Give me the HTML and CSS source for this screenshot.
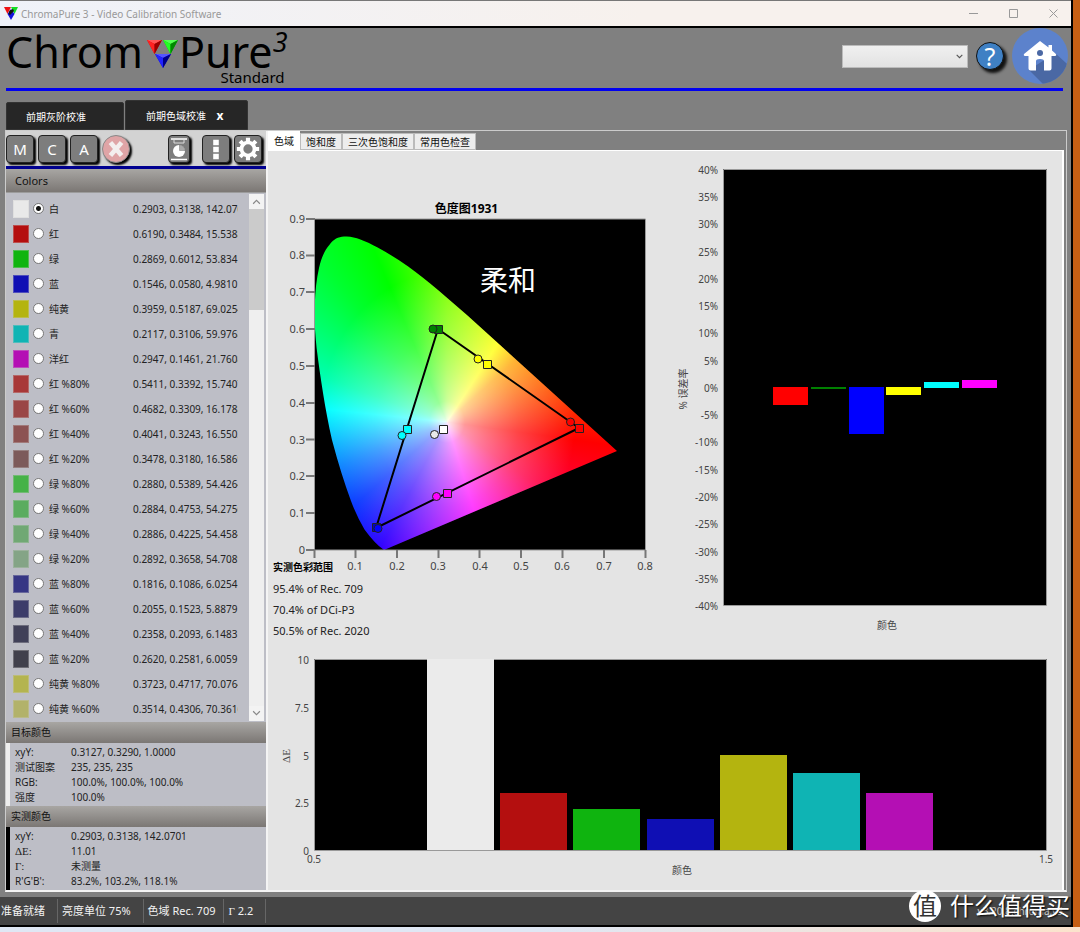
FILE: index.html
```html
<!DOCTYPE html>
<html lang="zh-CN">
<head>
<meta charset="utf-8">
<meta name="viewport" content="width=device-width, initial-scale=1">
<title>ChromaPure 3 - Video Calibration Software</title>
<link rel="stylesheet" href="styles.css">
</head>
<body>
<div class="app">
  <header class="titlebar">
    <svg class="app-icon" viewBox="0 0 14 15" aria-hidden="true"><path d="M0 1h7l-3.500 7z" fill="#e11"/><path d="M7 1h7l-3.500 7z" fill="#1d2"/><path d="M3.500 8L7 3l3.500 5L7 14z" fill="#11d"/><path d="M5.500 4.500L9 3l1 2-4 4-1.500-1z" fill="#111"/></svg>
    <span class="title">ChromaPure 3 - Video Calibration Software</span>
    <div class="window-buttons">
      <button type="button" aria-label="最小化"><svg viewBox="0 0 12 12"><path d="M1 5.500h9"/></svg></button>
      <button type="button" aria-label="最大化"><svg viewBox="0 0 12 12"><path d="M1.500 1.500h8v8h-8z"/></svg></button>
      <button type="button" aria-label="关闭"><svg viewBox="0 0 12 12"><path d="M1.500 1.500l8 8M9.500 1.500l-8 8"/></svg></button>
    </div>
  </header>

  <div class="banner">
    <div class="brand">
      <div class="wordmark">
        <span>Chrom</span>
        <svg class="brand-mark" viewBox="0 0 32 28" aria-hidden="true">
          <path d="M0 0h15l-7.500 14z" fill="#d00"/><path d="M0 0h15l-7.500 4z" fill="#f55"/><path d="M0 0l7.500 4v10z" fill="#f22"/><path d="M15 0L7.500 4v10z" fill="#900"/>
          <path d="M16 0h15l-7.500 14z" fill="#0b0"/><path d="M16 0h15l-7.500 4z" fill="#5f5"/><path d="M16 0l7.500 4v10z" fill="#2f2"/><path d="M31 0l-7.500 4v10z" fill="#080"/>
          <path d="M8 14h16l-8 14z" fill="#00c"/><path d="M8 14h16l-8 4z" fill="#55f"/><path d="M8 14l8 4v10z" fill="#22f"/><path d="M24 14l-8 4v10z" fill="#008"/>
        </svg>
        <span>Pure</span><span class="version">3</span>
      </div>
      <div class="edition">Standard</div>
    </div>
    <div class="banner-tools">
      <label class="picker">
        <select aria-label="选择"><option></option></select>
        <svg viewBox="0 0 8 6" aria-hidden="true"><path d="M1.500 1.500L4 4l2.500-2.500"/></svg>
      </label>
      <button class="help" type="button">?</button>
      <button class="home" type="button" aria-label="主页">
        <svg viewBox="0 0 56 56">
          <defs><clipPath id="disc"><circle cx="28" cy="28" r="28"/></clipPath></defs>
          <circle cx="28" cy="28" r="28" fill="#5c82cc"/>
          <g clip-path="url(#disc)"><path d="M43 25L66 46 50 66 31 56 17 42z" fill="#4a68a4"/></g>
          <path d="M28 13L12 26q-1 2 2 2h2.500v12.500q0 2 2 2H24V33q0-2 4-2t4 2v9.500h5.500q2 0 2-2V28H42q3 0 2-2l-4-3.500V17h-3.500v2.500z" fill="#fff"/>
          <circle cx="28" cy="25" r="3" fill="#4a68a4"/>
        </svg>
      </button>
    </div>
  </div>

  <nav class="doc-tabs">
    <button type="button" class="doc-tab">前期灰阶校准</button>
    <button type="button" class="doc-tab active">前期色域校准 <b>x</b></button>
  </nav>

  <main class="workspace">
    <aside class="sidebar">
      <div class="toolbar">
        <button type="button" class="tool">M</button>
        <button type="button" class="tool">C</button>
        <button type="button" class="tool">A</button>
        <button type="button" class="tool stop" aria-label="停止"><svg viewBox="0 0 28 28"><path d="M8 7l12 14M20 7L8 21" stroke="#f3eeee" stroke-width="5"/></svg></button>
        <button type="button" class="tool report" aria-label="报告"><svg viewBox="0 0 20 26"><path d="M2 3h16M2 23.500h16" stroke="#fff" stroke-width="1.500"/><path d="M5 4v3h10V4" fill="none" stroke="#ddd"/><circle cx="10" cy="15" r="6" fill="#fff"/><path d="M10.500 14.500V9a6 6 0 0 1 5.500 5.500z" fill="#aaa" stroke="#777" stroke-width=".5"/></svg></button>
        <button type="button" class="tool" aria-label="更多"><svg viewBox="0 0 28 28"><path d="M11 4h6v6h-6zM11 11.500h6v6h-6zM11 19h6v6h-6z" fill="#fff"/></svg></button>
        <button type="button" class="tool" aria-label="设置"><svg viewBox="0 0 28 28"><circle cx="14" cy="14" r="7" fill="none" stroke="#fff" stroke-width="4"/><path d="M14 2v5M14 21v5M2 14h5M21 14h5M5.500 5.500L9 9M19 19l3.500 3.500M22.500 5.500L19 9M9 19l-3.500 3.500" stroke="#fff" stroke-width="4.500"/></svg></button>
      </div>
      <h2 class="bar bar-colors">Colors</h2>
      <div class="color-area">
        <div class="color-list">
          <label class="row"><i style="background:#e9e9e9"></i><input type="radio" name="color" checked><span>白</span><output>0.2903, 0.3138, 142.0701</output></label>
          <label class="row"><i style="background:#b40f0f"></i><input type="radio" name="color"><span>红</span><output>0.6190, 0.3484, 15.5388</output></label>
          <label class="row"><i style="background:#0fb40f"></i><input type="radio" name="color"><span>绿</span><output>0.2869, 0.6012, 53.8341</output></label>
          <label class="row"><i style="background:#0f0fb4"></i><input type="radio" name="color"><span>蓝</span><output>0.1546, 0.0580, 4.9810</output></label>
          <label class="row"><i style="background:#b4b40f"></i><input type="radio" name="color"><span>纯黄</span><output>0.3959, 0.5187, 69.0254</output></label>
          <label class="row"><i style="background:#0fb4b4"></i><input type="radio" name="color"><span>青</span><output>0.2117, 0.3106, 59.9768</output></label>
          <label class="row"><i style="background:#b40fb4"></i><input type="radio" name="color"><span>洋红</span><output>0.2947, 0.1461, 21.7608</output></label>
          <label class="row"><i style="background:#a83838"></i><input type="radio" name="color"><span>红 %80%</span><output>0.5411, 0.3392, 15.7407</output></label>
          <label class="row"><i style="background:#9a4646"></i><input type="radio" name="color"><span>红 %60%</span><output>0.4682, 0.3309, 16.1788</output></label>
          <label class="row"><i style="background:#8c5252"></i><input type="radio" name="color"><span>红 %40%</span><output>0.4041, 0.3243, 16.5503</output></label>
          <label class="row"><i style="background:#7c5a5a"></i><input type="radio" name="color"><span>红 %20%</span><output>0.3478, 0.3180, 16.5869</output></label>
          <label class="row"><i style="background:#46b248"></i><input type="radio" name="color"><span>绿 %80%</span><output>0.2880, 0.5389, 54.4264</output></label>
          <label class="row"><i style="background:#5bac5f"></i><input type="radio" name="color"><span>绿 %60%</span><output>0.2884, 0.4753, 54.2756</output></label>
          <label class="row"><i style="background:#70a874"></i><input type="radio" name="color"><span>绿 %40%</span><output>0.2886, 0.4225, 54.4584</output></label>
          <label class="row"><i style="background:#84a486"></i><input type="radio" name="color"><span>绿 %20%</span><output>0.2892, 0.3658, 54.7089</output></label>
          <label class="row"><i style="background:#363684"></i><input type="radio" name="color"><span>蓝 %80%</span><output>0.1816, 0.1086, 6.0254</output></label>
          <label class="row"><i style="background:#3c3c6a"></i><input type="radio" name="color"><span>蓝 %60%</span><output>0.2055, 0.1523, 5.8879</output></label>
          <label class="row"><i style="background:#404058"></i><input type="radio" name="color"><span>蓝 %40%</span><output>0.2358, 0.2093, 6.1483</output></label>
          <label class="row"><i style="background:#40404c"></i><input type="radio" name="color"><span>蓝 %20%</span><output>0.2620, 0.2581, 6.0059</output></label>
          <label class="row"><i style="background:#b4b450"></i><input type="radio" name="color"><span>纯黄 %80%</span><output>0.3723, 0.4717, 70.0764</output></label>
          <label class="row"><i style="background:#b2b26a"></i><input type="radio" name="color"><span>纯黄 %60%</span><output>0.3514, 0.4306, 70.3616</output></label>
        </div>
        <div class="scrollbar">
          <button type="button" aria-label="向上"><svg viewBox="0 0 8 6"><path d="M1 5l3-3 3 3"/></svg></button>
          <div class="thumb"></div>
          <button type="button" class="down" aria-label="向下"><svg viewBox="0 0 8 6"><path d="M1 1l3 3 3-3"/></svg></button>
        </div>
      </div>
      <h2 class="bar">目标颜色</h2>
      <dl class="facts target">
        <dt>xyY:</dt><dd>0.3127, 0.3290, 1.0000</dd>
        <dt>测试图案</dt><dd>235, 235, 235</dd>
        <dt>RGB:</dt><dd>100.0%, 100.0%, 100.0%</dd>
        <dt>强度</dt><dd>100.0%</dd>
      </dl>
      <h2 class="bar">实测颜色</h2>
      <dl class="facts measured">
        <dt>xyY:</dt><dd>0.2903, 0.3138, 142.0701</dd>
        <dt class="serif">ΔE:</dt><dd>11.01</dd>
        <dt class="serif">Γ:</dt><dd>未测量</dd>
        <dt>R'G'B':</dt><dd>83.2%, 103.2%, 118.1%</dd>
      </dl>
    </aside>

    <section class="results">
      <div class="view-tabs">
        <button type="button" class="active">色域</button>
        <button type="button">饱和度</button>
        <button type="button">三次色饱和度</button>
        <button type="button">常用色检查</button>
      </div>
      <div class="charts">
        <div class="gamut">
          <svg class="chart" viewBox="268 152 400 404">
            <defs>
              <clipPath id="locus"><path d="M70 331 Q61 325 50.500 310.500 Q43 298 37 282 Q27 255 18 221 C11 190 6 156 2.600 129 C1 113 0 98 .8 85 C1.200 72 2.500 60 5 49 C7.500 38 11 31 15.300 26 C20 20 24 18 30 17.600 C36 17 41 18.500 46.400 20.500 C52 22.500 58 25.500 63.200 28.200 C74 34 84 40.500 94.200 47.600 C104 54.500 114 63 124 71 L153.500 96.600 L303 232z"/></clipPath>
            </defs>
            <text class="chart-title" x="466.500" y="213" text-anchor="middle">色度图1931</text>
            <path d="M314 219h331v331h-331z" fill="#000"/>
            <g transform="translate(314 219)"><g clip-path="url(#locus)"><foreignObject width="331" height="331"><div class="spectrum"></div></foreignObject></g></g>
            <path class="frame" d="M314.500 550V219H645.500V550z"/>
            <path class="axis" d="M306 219h9M306 255.500h9M306 292h9M306 329h9M306 366h9M306 403h9M306 439.500h9M306 476h9M306 513h9M306 550h9M314.500 550v8M355.500 550v8M397 550v8M438.500 550v8M479.500 550v8M521 550v8M562.500 550v8M604 550v8M645.500 550v8"/>
            <g class="label" text-anchor="end">
              <text x="305" y="223">0.9</text><text x="305" y="259">0.8</text><text x="305" y="296">0.7</text><text x="305" y="333">0.6</text><text x="305" y="370">0.5</text><text x="305" y="407">0.4</text><text x="305" y="444">0.3</text><text x="305" y="480">0.2</text><text x="305" y="517">0.1</text><text x="305" y="554">0</text>
            </g>
            <g class="label" text-anchor="middle">
              <text x="314" y="570">0</text><text x="355" y="570">0.1</text><text x="397" y="570">0.2</text><text x="438" y="570">0.3</text><text x="480" y="570">0.4</text><text x="521" y="570">0.5</text><text x="562" y="570">0.6</text><text x="604" y="570">0.7</text><text x="645" y="570">0.8</text>
            </g>
            <path d="M438 329L376 528 579 428z" fill="none" stroke="#000" stroke-width="2"/>
            <g class="marks">
              <path d="M434.500 325.500h8v8h-8z" fill="#008000"/><circle cx="433" cy="329" r="4" fill="#008000"/>
              <path d="M483.500 360.500h8v8h-8z" fill="#ff0"/><circle cx="478" cy="359" r="4" fill="#ff0"/>
              <path d="M575.500 424.500h8v8h-8z" fill="#f00"/><circle cx="570.500" cy="422" r="4" fill="#f00"/>
              <path d="M443.500 489.500h8v8h-8z" fill="#f0f"/><circle cx="436.500" cy="496.500" r="4" fill="#f0f"/>
              <path d="M372.500 523.500h8v8h-8z" fill="#00c"/><circle cx="378" cy="528.500" r="4" fill="#00f"/>
              <path d="M403.500 425.500h8v8h-8z" fill="#0ff"/><circle cx="402" cy="435.500" r="4" fill="#0ff"/>
              <path d="M439.500 425.500h8v8h-8z" fill="#fff"/><circle cx="434.500" cy="434.500" r="4" fill="#e9e9e9"/>
            </g>
            <text class="note" x="480" y="291">柔和</text>
          </svg>
          <div class="coverage">
            <h3>实测色彩范围</h3>
            <p>95.4% of Rec. 709</p>
            <p>70.4% of DCi-P3</p>
            <p>50.5% of Rec. 2020</p>
          </div>
        </div>

        <svg class="chart" viewBox="668 152 394 490">
          <path d="M723 169h324v436h-324z" fill="#000"/>
          <path class="frame" d="M723.500 169.500h323v436h-323z"/>
          <g class="label small" text-anchor="end">
            <text x="718" y="174">40%</text><text x="718" y="201">35%</text><text x="718" y="228">30%</text><text x="718" y="256">25%</text><text x="718" y="283">20%</text><text x="718" y="310">15%</text><text x="718" y="337">10%</text><text x="718" y="365">5%</text><text x="718" y="392">0%</text><text x="718" y="419">-5%</text><text x="718" y="446">-10%</text><text x="718" y="474">-15%</text><text x="718" y="501">-20%</text><text x="718" y="528">-25%</text><text x="718" y="556">-30%</text><text x="718" y="583">-35%</text><text x="718" y="610">-40%</text>
          </g>
          <path d="M773 387h35v18h-35z" fill="#f00"/>
          <path d="M811 387h35v2h-35z" fill="#008000"/>
          <path d="M849 387h35v47h-35z" fill="#00f"/>
          <path d="M886 387h35v8h-35z" fill="#ff0"/>
          <path d="M924 382h35v6h-35z" fill="#0ff"/>
          <path d="M962 380h35v8h-35z" fill="#f0f"/>
          <text class="label small" transform="translate(687 389) rotate(-90)" text-anchor="middle">% 误差率</text>
          <text class="label small" x="887" y="629" text-anchor="middle">颜色</text>
        </svg>

        <svg class="chart wide" viewBox="268 642 794 246">
          <path d="M314 659h733v191h-733z" fill="#000"/>
          <path class="frame" d="M314.500 659.500h732v191h-732z"/>
          <g class="label small" text-anchor="end">
            <text x="309" y="664">10</text><text x="309" y="712">7.5</text><text x="309" y="760">5</text><text x="309" y="807">2.5</text><text x="309" y="855">0</text>
          </g>
          <path d="M427 659h67v191h-67z" fill="#ebebeb"/>
          <path d="M500 793h67v57h-67z" fill="#b40f0f"/>
          <path d="M573 809h67v41h-67z" fill="#0fb40f"/>
          <path d="M647 819h67v31h-67z" fill="#0f0fb4"/>
          <path d="M720 755h67v95h-67z" fill="#b4b40f"/>
          <path d="M793 773h67v77h-67z" fill="#0fb4b4"/>
          <path d="M866 793h67v57h-67z" fill="#b40fb4"/>
          <text class="label small" x="314" y="863" text-anchor="middle">0.5</text>
          <text class="label small" x="1046" y="863" text-anchor="middle">1.5</text>
          <text class="label serif" transform="translate(290 756) rotate(-90)" text-anchor="middle">ΔE</text>
          <text class="label small" x="682" y="874" text-anchor="middle">颜色</text>
        </svg>
      </div>
    </section>
  </main>

  <footer class="status">
    <span class="ready">准备就绪</span>
    <span class="unit">亮度单位 75%</span>
    <span class="space">色域 Rec. 709</span>
    <span class="gamma"><i>Γ</i> 2.2</span>
    <span class="build">v3.20.8.chroma.v3</span>
  </footer>
</div>
<div class="watermark"><span class="seal">值</span><span>什么值得买</span></div>
</body>
</html>
```
FILE: styles.css
```css
* { box-sizing: border-box; }

body {
  margin: 0;
  position: relative;
  padding: 0 7px 6px 0;
  background: linear-gradient(90deg, #dfe7f4, #dfe7f4 50%, #fbe3cc) bottom / 100% 6px no-repeat, #c65f14;
  font-family: "Noto Sans", "Noto Sans CJK SC", sans-serif;
  font-size: 10px;
  color: #222;
}

button { font: inherit; color: inherit; border: 0; padding: 0; background: none; }
h2, h3, p, dl, dd { margin: 0; font: inherit; }
.serif { font-family: "Liberation Serif", serif; }

.app {
  background: #808080;
  border-right: 2px solid #000;
  border-bottom: 2px solid #000;
}

/* title bar */
.titlebar {
  display: flex;
  align-items: center;
  height: 28px;
  padding-left: 4px;
  border-top: 1px solid #777;
  border-bottom: 2px solid #000;
  background: linear-gradient(90deg, #eff2f9, #f7f1ed 60%);
  color: #999;
}
.app-icon { width: 14px; height: 15px; margin-right: 3px; }
.window-buttons { display: flex; gap: 28px; margin-left: auto; padding-right: 11px; }
.window-buttons button { width: 12px; height: 12px; }
.window-buttons svg { display: block; fill: none; stroke: #999; }

/* banner */
.banner {
  display: flex;
  justify-content: space-between;
  height: 63px;
  margin: 0 8px 0 6px;
  border-bottom: 3px solid #0000f0;
}
.brand { color: #000; }
.wordmark { display: flex; font-size: 43px; line-height: 48px; height: 41px; }
.brand-mark { width: 32px; height: 28px; margin: 12px 0 0 4px; }
.version { font-size: 27px; font-style: italic; line-height: 28px; }
.edition { padding-right: 3px; font-size: 15px; line-height: 16px; text-align: right; }
.banner-tools { display: flex; align-items: center; gap: 8px; margin-right: -5px; }
.picker { display: flex; position: relative; }
.picker select {
  width: 126px;
  height: 23px;
  appearance: none;
  border: 1px solid #bbb;
  border-radius: 0;
  background: linear-gradient(#f0f0f0, #e2e2e2);
}
.picker svg { position: absolute; right: 4px; top: 8px; width: 9px; height: 7px; fill: none; stroke: #555; }
.help {
  width: 28px;
  height: 28px;
  border: 1px solid #111;
  border-radius: 50%;
  background: #3f80c4;
  box-shadow: 3px 3px 3px #111;
  color: #fff;
  font-size: 25px;
  line-height: 26px;
}
.banner-tools { height: 56px; }
.home { width: 56px; height: 56px; }
.home svg { display: block; }

/* document tabs */
.doc-tabs { display: flex; align-items: flex-end; gap: 1px; height: 39px; padding-left: 6px; }
.doc-tab {
  width: 118px;
  height: 28px;
  padding-left: 19px;
  border: 1px solid #333;
  border-radius: 2px 2px 0 0;
  background: #262626;
  color: #fff;
  text-align: left;
}
.doc-tab.active { width: 123px; height: 30px; padding-left: 20px; }
.doc-tab b { padding-left: 8px; font-size: 12px; }

/* workspace */
.workspace {
  display: grid;
  grid-template-columns: 260px minmax(0, 1fr);
  margin: 0 4px 0 5px;
  border: 1px solid #ccc;
  border-bottom: 2px solid #f4f4f4;
}
.sidebar { background: #bdbec6; }
.toolbar {
  display: flex;
  align-items: center;
  gap: 4px;
  height: 38px;
  border-bottom: 3px solid #000090;
  background: #d3d3d3;
}
.tool {
  width: 28px;
  height: 28px;
  border: 1px solid #222;
  border-radius: 4px;
  background: #7d7d7d;
  box-shadow: 2px 2px 2px #000;
  color: #fff;
  font-size: 15px;
  line-height: 26px;
}
.tool svg { display: block; width: 100%; height: 100%; }
.tool.stop { border: 1px solid #888; border-radius: 50%; background: #dfa4a6; }
.tool.report { width: 22px; margin: 0 8px 0 auto; }
.tool:last-child { margin-right: 4px; }

.bar {
  height: 21px;
  padding-left: 5px;
  background: linear-gradient(#a8a6a3, #7b7774);
  line-height: 21px;
  color: #111;
}
.bar-colors { height: 23px; padding-left: 9px; font-size: 11px; line-height: 23px; }

.color-area { display: flex; justify-content: space-between; padding: 1px 2px 1px 7px; border-top: 1px solid #9c9c9c; }
.color-list { padding-top: 2px; }
.row { display: flex; align-items: center; height: 25px; }
.row i { width: 16px; height: 18px; border: 1px solid #cccccc55; }
.row input {
  width: 11px;
  height: 11px;
  margin: 0 5px 0 4px;
  appearance: none;
  border: 1px solid #777;
  border-radius: 50%;
  background: #fff;
}
.row input:checked { background: radial-gradient(#111 0 2px, #fff 3px); }
.row span { width: 84px; }
.row output { width: 105px; overflow: hidden; white-space: nowrap; }

.scrollbar { display: flex; flex-direction: column; width: 15px; background: #efefef; }
.scrollbar button { height: 15px; background: #f3f3f3; }
.scrollbar svg { display: block; width: 9px; height: 7px; margin: 0 auto; fill: none; stroke: #888; }
.thumb { height: 101px; background: #cbcbcb; }
.scrollbar .down { margin-top: auto; }

.facts {
  display: grid;
  grid-template-columns: 56px 1fr;
  padding: 2px 0 1px 5px;
  border-left: 4px solid #eee;
  line-height: 15px;
}
.facts.measured { border-left-color: #000; }
.facts .serif { font-size: 11px; }

/* result charts */
.results { display: flex; flex-direction: column; border-left: 2px solid #f4f4f4; background: #808080; }
.view-tabs { display: flex; align-items: flex-end; height: 19px; }
.view-tabs button { height: 17px; padding: 0 5px; border: 1px solid #bbb; background: #ededed; color: #111; }
.view-tabs .active { height: 19px; border-color: #fff; background: #fff; }
.charts {
  flex: 1;
  display: grid;
  grid-template-columns: 400fr 394fr;
  align-content: start;
  padding: 1px 0 0;
  margin-right: 2px;
  border-top: 1px solid #fff;
  border-right: 2px solid #fff;
  background: #e4e4e4;
}
.chart { display: block; width: 100%; overflow: visible; font-family: "Noto Sans", "Noto Sans CJK SC", sans-serif; }
.chart.wide { grid-column: 1 / -1; }
.label { font-size: 11px; fill: #444; }
.label.small { font-size: 10px; }
.label.serif { font-family: "Liberation Serif", serif; }
.chart-title { font-size: 12px; font-weight: 700; fill: #000; }
.note { font-size: 28px; fill: #fff; }
.frame { fill: none; stroke: #999; }
.axis { stroke: #777; stroke-width: 2; }
.marks { stroke: #222; }
.spectrum {
  width: 331px;
  height: 331px;
  background:
    radial-gradient(128px 150px at 133px 203px, #fffe, #fff9 14%, #fff7 30%, #fff4 56%, #fff2 78%, #fff0),
    conic-gradient(from 0deg at 133px 203px,
      #80ff00 0deg, #ffff00 33deg, #ffa000 48deg, #ff5000 73deg, #ff0000 98deg, #ff0048 125deg,
      #ff00ff 163deg, #8000ff 190deg, #3000ff 208deg, #0030ff 228deg, #0080ff 248deg,
      #00ffff 276deg, #00ffb0 290deg, #00ff30 322deg, #00ff00 337deg, #80ff00 360deg);
}
.coverage { padding-left: 5px; font-size: 11px; line-height: 21px; }
.coverage h3 { position: relative; font-size: 10px; font-weight: 700; line-height: 22px; color: #000; }

/* status bar */
.status {
  display: flex;
  align-items: center;
  height: 28px;
  margin-top: 5px;
  background: #444;
  color: #f2f2f2;
  font-size: 11px;
}
.status span { padding: 0 12px 0 4px; border-right: 1px solid #666; line-height: 24px; white-space: nowrap; }
.status .ready { padding-left: 1px; }
.status .space { padding-right: 8px; }
.status i { font-family: "Liberation Serif", serif; font-style: normal; }
.status .build { margin-left: auto; padding-right: 8px; border: 0; font-size: 10px; color: #ccc; }

.watermark {
  position: absolute;
  right: 10px;
  bottom: 11px;
  display: flex;
  align-items: center;
  gap: 9px;
  color: #fff;
  font-size: 24px;
  line-height: 32px;
  text-shadow: 1px 1px 2px #000;
}
.seal {
  width: 32px;
  height: 32px;
  border-radius: 50%;
  background: #fff;
  color: #333;
  text-align: center;
  text-shadow: none;
}
```
